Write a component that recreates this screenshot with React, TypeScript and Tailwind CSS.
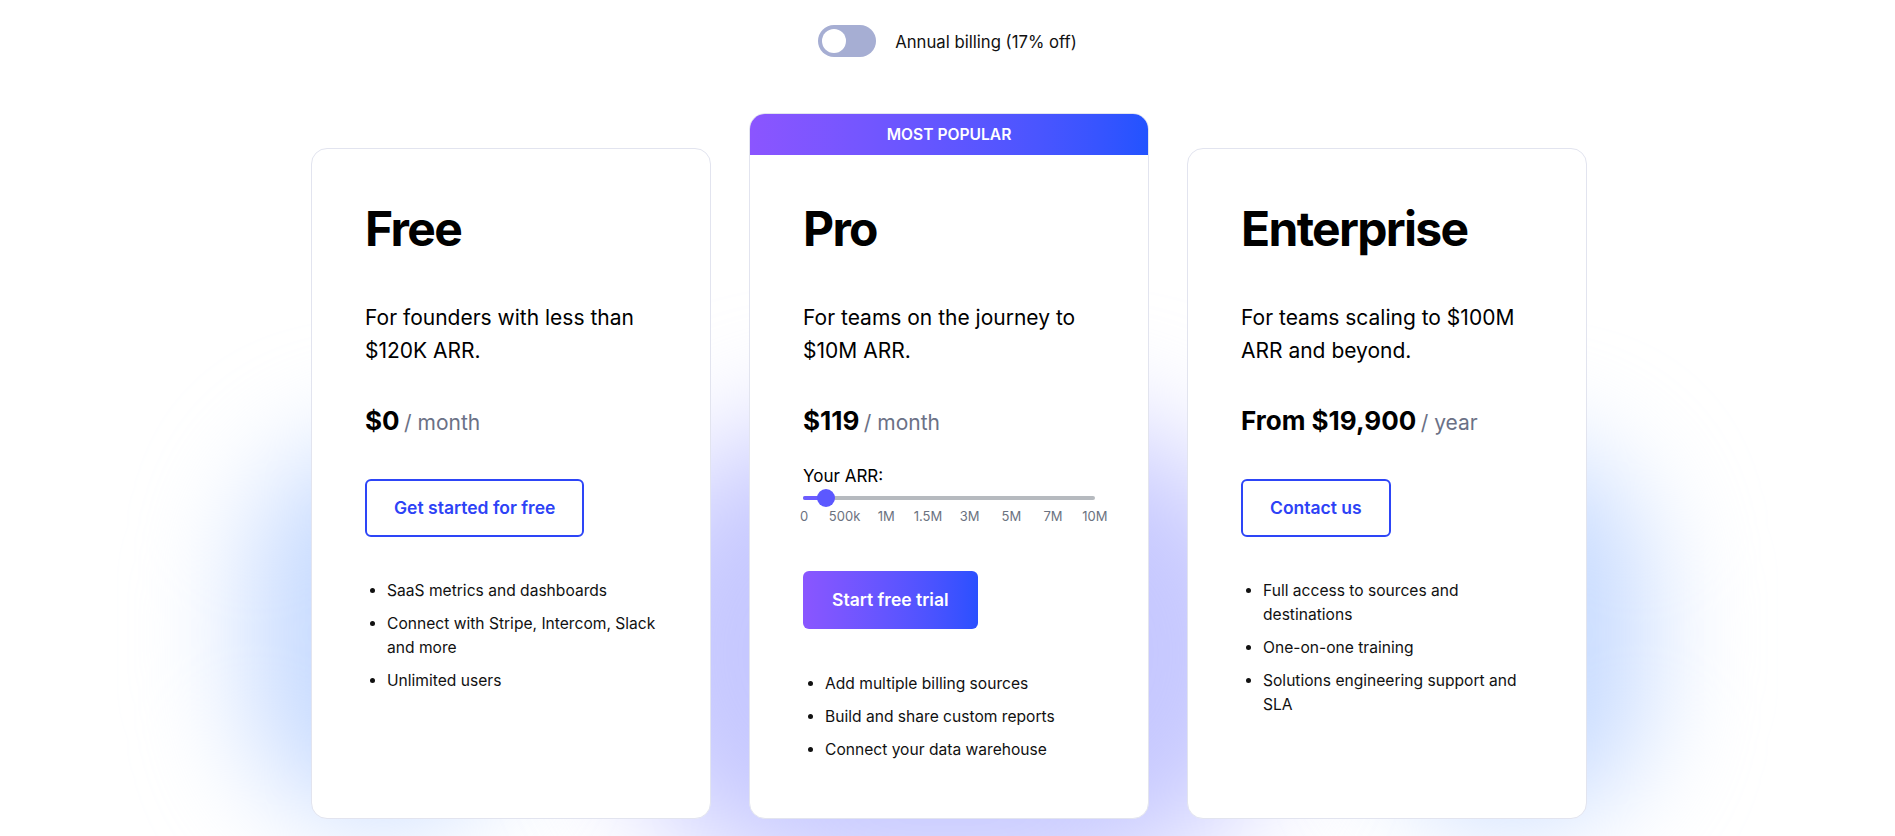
import React from "react";

const freeFeatures = ["SaaS metrics and dashboards", "Connect with Stripe, Intercom, Slack and more", "Unlimited users"];
const proFeatures = ["Add multiple billing sources", "Build and share custom reports", "Connect your data warehouse"];
const entFeatures = ["Full access to sources and destinations", "One-on-one training", "Solutions engineering support and SLA"];
const ticks = ["0", "500k", "1M", "1.5M", "3M", "5M", "7M", "10M"];

function Features({ items, className }: { items: string[]; className: string }) {
  return (
    <ul className={`list-disc space-y-[9px] pl-[22px] text-[15.6px] leading-6 text-[#111111] ${className}`}>
      {items.map((f) => (
        <li key={f}>{f}</li>
      ))}
    </ul>
  );
}

function Price({ amount, unit }: { amount: string; unit: string }) {
  return (
    <div className="mt-[38px] leading-[32px]">
      <span className="text-[26px] font-bold">{amount}</span>{" "}
      <span className="text-[21px] text-[#6b7186]">/ {unit}</span>
    </div>
  );
}

function OutlineButton({ label }: { label: string }) {
  return (
    <button className="mt-[39px] flex h-[58px] w-fit items-center rounded-md border-2 border-[#2d45f7] px-[27px] text-[17.5px] font-semibold text-[#2d42f6]">
      {label}
    </button>
  );
}

export default function App() {
  return (
    <div className="relative h-[836px] overflow-hidden bg-white font-[Inter,sans-serif] text-black">
      <div className="flex items-center justify-center gap-[19px] pt-[25px]">
        <div className="flex h-8 w-[58px] items-center rounded-full bg-[#a6aed3] p-1">
          <div className="h-6 w-6 rounded-full bg-white" />
        </div>
        <span className="pt-[2px] text-[16.7px] leading-6 text-[#111111]">Annual billing (17% off)</span>
      </div>

      <div className="relative mx-auto mt-[56px] flex w-[1279px] items-end gap-[38px] pl-[3px]">
        {/* background glow */}
        <div className="pointer-events-none absolute inset-0">
          <div className="absolute left-[-60px] top-[330px] h-[380px] w-[270px] rounded-full bg-[#c6daff] blur-[55px]" />
          <div className="absolute right-[-60px] top-[330px] h-[380px] w-[270px] rounded-full bg-[#c6daff] blur-[55px]" />
          <div className="absolute left-[300px] top-[310px] h-[460px] w-[680px] rounded-full bg-[#c6c8ff] blur-[60px]" />
        </div>

        {/* Free */}
        <div className="relative h-[671px] w-[400px] shrink-0 rounded-2xl border border-[#e2e4ef] bg-white px-[53px] pt-[56px]">
          <h2 className="text-[48px] font-bold leading-[48px] tracking-[-0.035em]">Free</h2>
          <p className="mt-[48px] text-[21px] leading-[33px]">For founders with less than $120K ARR.</p>
          <Price amount="$0" unit="month" />
          <OutlineButton label="Get started for free" />
          <Features items={freeFeatures} className="mt-[42px]" />
        </div>

        {/* Pro */}
        <div className="relative flex h-[706px] w-[400px] shrink-0 flex-col overflow-hidden rounded-2xl border border-[#e2e4ef] bg-white">
          <div className="flex h-[41px] items-center justify-center bg-linear-to-r from-[#8b55ff] to-[#2253ff] text-[15.6px] font-semibold text-white">
            MOST POPULAR
          </div>
          <div className="px-[53px] pt-[50px]">
            <h2 className="text-[48px] font-bold leading-[48px] tracking-[-0.035em]">Pro</h2>
            <p className="mt-[48px] text-[21px] leading-[33px]">For teams on the journey to $10M ARR.</p>
            <Price amount="$119" unit="month" />
            <div className="mt-[24px] text-[17px] leading-6">Your ARR:</div>
            <div className="relative mt-[1px] h-[18px]">
              <div className="absolute inset-x-0 top-[7px] h-1 rounded-full bg-[#b6babf]" />
              <div className="absolute left-0 top-[7px] h-1 w-[23px] rounded-full bg-[#6c5cff]" />
              <div className="absolute left-[14px] top-0 h-[18px] w-[18px] rounded-full bg-[#5c58ff]" />
            </div>
            <div className="ml-[-21px] mt-[1px] flex w-[334px] text-[13px] leading-4 text-[#6b7280]">
              {ticks.map((t, i) => (
                <span key={t} className={i === 0 ? "w-[41.71px] shrink-0 pl-[18px] text-left" : "w-[41.71px] shrink-0 text-center"}>
                  {t}
                </span>
              ))}
            </div>
            <button className="mt-[47px] flex h-[58px] w-fit items-center rounded-md bg-linear-to-r from-[#8a56ff] to-[#2a50ff] px-[29px] text-[17.5px] font-semibold text-white">
              Start free trial
            </button>
            <Features items={proFeatures} className="mt-[43px]" />
          </div>
        </div>

        {/* Enterprise */}
        <div className="relative h-[671px] w-[400px] shrink-0 rounded-2xl border border-[#e2e4ef] bg-white px-[53px] pt-[56px]">
          <h2 className="text-[48px] font-bold leading-[48px] tracking-[-0.035em]">Enterprise</h2>
          <p className="mt-[48px] text-[21px] leading-[33px]">For teams scaling to $100M ARR and beyond.</p>
          <Price amount="From $19,900" unit="year" />
          <OutlineButton label="Contact us" />
          <Features items={entFeatures} className="mt-[42px]" />
        </div>
      </div>
    </div>
  );
}
